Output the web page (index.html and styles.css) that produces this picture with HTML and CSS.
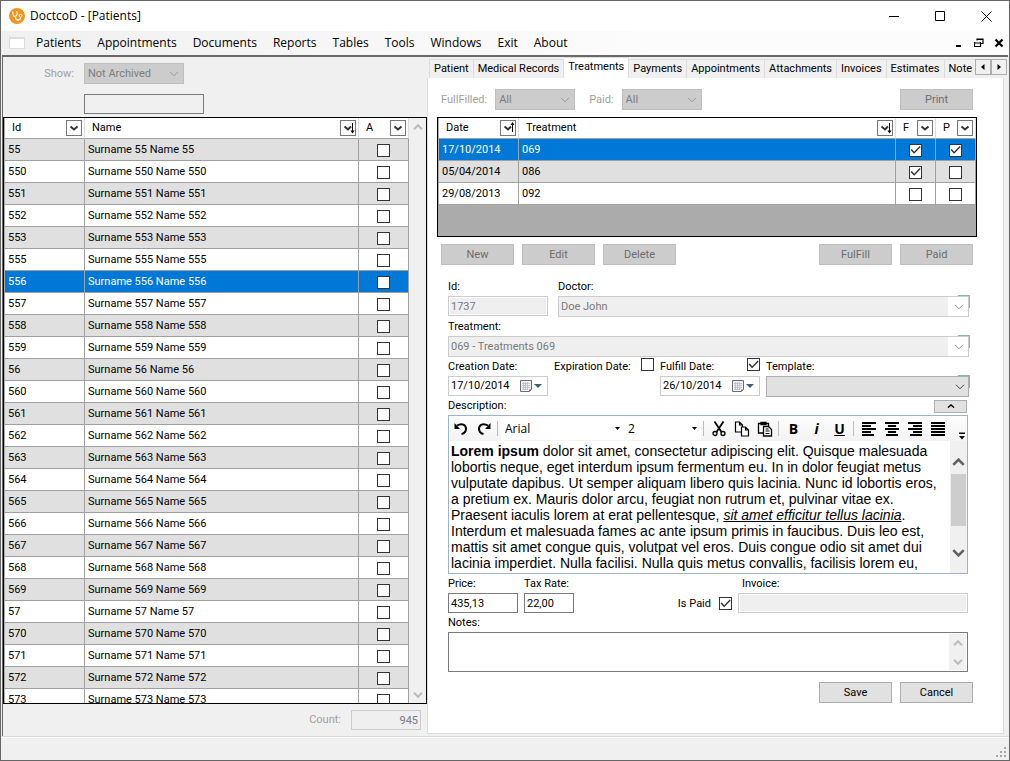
FILE: index.html
```html
<!DOCTYPE html>
<html lang="en">
<head>
<meta charset="utf-8">
<title>DoctcoD - [Patients]</title>
<link rel="stylesheet" href="styles.css">
</head>
<body>
<svg class="defs" aria-hidden="true">
  <symbol id="chev" viewBox="0 0 10 6"><path d="M1 .8 5 4.800 9 .8" fill="none" stroke="currentColor"/></symbol>
  <symbol id="filter" viewBox="0 0 14 14"><path d="M3.500 5.500 7 8.500l3.500-3" fill="none" stroke="#333" stroke-width="2"/></symbol>
  <symbol id="filter-down" viewBox="0 0 14 14"><path d="M3.500 5.500 7 8.500l3-3" fill="none" stroke="#333" stroke-width="2"/><path d="M11.500 2v9" stroke="#000"/><path d="M9.500 9.500h4l-2 3z"/></symbol>
  <symbol id="filter-up" viewBox="0 0 14 14"><path d="M3.500 5.500 7 8.500l3-3" fill="none" stroke="#333" stroke-width="2"/><path d="M11.500 2v9" stroke="#000"/><path d="M9.500 4h4l-2-3z"/></symbol>
  <symbol id="calendar" viewBox="0 0 12 12"><path d="M.5.5h11v9l-2 2h-9z" fill="#f2f2f4" stroke="#6e6a70"/><path d="M2 3.500h8M2 5.500h8M2 7.500h8M2 9.500h6M3.500 2v8M5.500 2v8M7.500 2v8" stroke="#a9b6d2" stroke-width=".7"/><path d="M9 11.500V9.500h2.500z" fill="#6e6a70"/></symbol>
</svg>
<div class="window">
  <header class="titlebar">
    <svg class="logo" viewBox="0 0 16 16" aria-hidden="true"><circle cx="8" cy="8" r="8" fill="#f3941f"/><path d="M4 3.500c-.8 3 .4 4.700 2.200 4.700S8.800 6 7.700 3.300M6.200 8.200c.1 3 1.200 4 2.900 3.900 2 0 2.500-1.400 2.500-3" fill="none" stroke="#fff" stroke-width="1.100"/><circle cx="11.600" cy="7.600" r="1.400" fill="none" stroke="#fff"/><circle cx="9" cy="12" r="1" fill="#fff"/></svg>
    <h1 class="title">DoctcoD - [Patients]</h1>
    <div class="caption">
      <button type="button" aria-label="Minimize"><svg viewBox="0 0 11 11"><path d="M0 5.500h10" stroke="#000"/></svg></button>
      <button type="button" aria-label="Maximize"><svg viewBox="0 0 11 11"><path d="M.5.5h9v9h-9z" fill="none" stroke="#000"/></svg></button>
      <button type="button" aria-label="Close"><svg viewBox="0 0 11 11"><path d="M.5.500l10 10M10.500.500l-10 10" stroke="#000"/></svg></button>
    </div>
  </header>
  <nav class="menubar">
    <span class="child-icon"></span>
    <button type="button">Patients</button><button type="button">Appointments</button><button type="button">Documents</button><button type="button">Reports</button><button type="button">Tables</button><button type="button">Tools</button><button type="button">Windows</button><button type="button">Exit</button><button type="button">About</button>
    <div class="child-caption">
      <button type="button" aria-label="Minimize child"><svg viewBox="0 0 10 10"><path d="M2 8h5" stroke="#000" stroke-width="2"/></svg></button>
      <button type="button" aria-label="Restore child"><svg viewBox="0 0 10 10"><path d="M3 1.500h6M3 .5v2M9 .5v5H7M3 1h6M1 5h6M.500 4v4.500h6V4" fill="none" stroke="#000" stroke-width="1.200"/></svg></button>
      <button type="button" aria-label="Close child"><svg viewBox="0 0 10 10"><path d="M1.500 1.500l7 7M8.500 1.500l-7 7" stroke="#000" stroke-width="2.200"/></svg></button>
    </div>
  </nav>
  <main class="client">
    <section class="list-pane">
      <div class="search">
        <label for="show">Show:</label>
        <select id="show" class="dim" disabled><option>Not Archived</option></select>
        <input id="search" class="plain" type="text" aria-label="Search">
      </div>
      <div class="grid patients">
        <div class="grid-body">
        <table>
          <colgroup><col class="c-id"><col><col class="c-a"></colgroup>
          <thead><tr>
            <th><div class="head">Id<button type="button" aria-label="Filter Id"><svg><use href="#filter"/></svg></button></div></th>
            <th><div class="head">Name<button type="button" aria-label="Filter Name"><svg><use href="#filter-down"/></svg></button></div></th>
            <th><div class="head">A<button type="button" aria-label="Filter A"><svg><use href="#filter"/></svg></button></div></th>
          </tr></thead>
          <tbody>
            <tr><td>55</td><td>Surname 55 Name 55</td><td><input type="checkbox" aria-label="Archived 55"></td></tr>
            <tr><td>550</td><td>Surname 550 Name 550</td><td><input type="checkbox" aria-label="Archived 550"></td></tr>
            <tr><td>551</td><td>Surname 551 Name 551</td><td><input type="checkbox" aria-label="Archived 551"></td></tr>
            <tr><td>552</td><td>Surname 552 Name 552</td><td><input type="checkbox" aria-label="Archived 552"></td></tr>
            <tr><td>553</td><td>Surname 553 Name 553</td><td><input type="checkbox" aria-label="Archived 553"></td></tr>
            <tr><td>555</td><td>Surname 555 Name 555</td><td><input type="checkbox" aria-label="Archived 555"></td></tr>
            <tr class="selected"><td>556</td><td>Surname 556 Name 556</td><td><input type="checkbox" aria-label="Archived 556"></td></tr>
            <tr><td>557</td><td>Surname 557 Name 557</td><td><input type="checkbox" aria-label="Archived 557"></td></tr>
            <tr><td>558</td><td>Surname 558 Name 558</td><td><input type="checkbox" aria-label="Archived 558"></td></tr>
            <tr><td>559</td><td>Surname 559 Name 559</td><td><input type="checkbox" aria-label="Archived 559"></td></tr>
            <tr><td>56</td><td>Surname 56 Name 56</td><td><input type="checkbox" aria-label="Archived 56"></td></tr>
            <tr><td>560</td><td>Surname 560 Name 560</td><td><input type="checkbox" aria-label="Archived 560"></td></tr>
            <tr><td>561</td><td>Surname 561 Name 561</td><td><input type="checkbox" aria-label="Archived 561"></td></tr>
            <tr><td>562</td><td>Surname 562 Name 562</td><td><input type="checkbox" aria-label="Archived 562"></td></tr>
            <tr><td>563</td><td>Surname 563 Name 563</td><td><input type="checkbox" aria-label="Archived 563"></td></tr>
            <tr><td>564</td><td>Surname 564 Name 564</td><td><input type="checkbox" aria-label="Archived 564"></td></tr>
            <tr><td>565</td><td>Surname 565 Name 565</td><td><input type="checkbox" aria-label="Archived 565"></td></tr>
            <tr><td>566</td><td>Surname 566 Name 566</td><td><input type="checkbox" aria-label="Archived 566"></td></tr>
            <tr><td>567</td><td>Surname 567 Name 567</td><td><input type="checkbox" aria-label="Archived 567"></td></tr>
            <tr><td>568</td><td>Surname 568 Name 568</td><td><input type="checkbox" aria-label="Archived 568"></td></tr>
            <tr><td>569</td><td>Surname 569 Name 569</td><td><input type="checkbox" aria-label="Archived 569"></td></tr>
            <tr><td>57</td><td>Surname 57 Name 57</td><td><input type="checkbox" aria-label="Archived 57"></td></tr>
            <tr><td>570</td><td>Surname 570 Name 570</td><td><input type="checkbox" aria-label="Archived 570"></td></tr>
            <tr><td>571</td><td>Surname 571 Name 571</td><td><input type="checkbox" aria-label="Archived 571"></td></tr>
            <tr><td>572</td><td>Surname 572 Name 572</td><td><input type="checkbox" aria-label="Archived 572"></td></tr>
            <tr><td>573</td><td>Surname 573 Name 573</td><td><input type="checkbox" aria-label="Archived 573"></td></tr>
          </tbody>
        </table>
        </div>
        <div class="scrollbar light">
          <button type="button" aria-label="Scroll up"><svg class="flip"><use href="#chev"/></svg></button>
          <button type="button" aria-label="Scroll down"><svg><use href="#chev"/></svg></button>
        </div>
      </div>
      <div class="count">
        <label for="count">Count:</label>
        <input id="count" type="text" value="945" disabled>
      </div>
    </section>

    <section class="detail-pane">
      <div class="tabs">
        <div class="tablist" role="tablist">
          <button type="button" role="tab">Patient</button><button type="button" role="tab">Medical Records</button><button type="button" role="tab" aria-selected="true">Treatments</button><button type="button" role="tab">Payments</button><button type="button" role="tab">Appointments</button><button type="button" role="tab">Attachments</button><button type="button" role="tab">Invoices</button><button type="button" role="tab">Estimates</button><button type="button" role="tab">Note</button>
        </div>
        <div class="spinner">
          <button type="button" aria-label="Previous tabs"><svg viewBox="0 0 6 6"><path d="M4.500 0v6L1 3z"/></svg></button>
          <button type="button" aria-label="Next tabs"><svg viewBox="0 0 6 6"><path d="M1.500 0v6L5 3z"/></svg></button>
        </div>
      </div>
      <div class="page">
        <div class="bar">
          <label for="fulfilled">FullFilled:</label>
          <select id="fulfilled" class="dim" disabled><option>All</option></select>
          <label for="paid-filter" class="next">Paid:</label>
          <select id="paid-filter" class="dim" disabled><option>All</option></select>
          <button type="button" class="btn push" disabled>Print</button>
        </div>
        <div class="grid treatments">
          <table>
            <colgroup><col class="c-id"><col><col class="c-f"><col class="c-f"></colgroup>
            <thead><tr>
              <th><div class="head">Date<button type="button" aria-label="Filter Date"><svg><use href="#filter-up"/></svg></button></div></th>
              <th><div class="head">Treatment<button type="button" aria-label="Filter Treatment"><svg><use href="#filter-down"/></svg></button></div></th>
              <th><div class="head">F<button type="button" aria-label="Filter F"><svg><use href="#filter"/></svg></button></div></th>
              <th><div class="head">P<button type="button" aria-label="Filter P"><svg><use href="#filter"/></svg></button></div></th>
            </tr></thead>
            <tbody>
              <tr class="selected"><td>17/10/2014</td><td>069</td><td><input type="checkbox" aria-label="Fulfilled 069" checked></td><td><input type="checkbox" aria-label="Paid 069" checked></td></tr>
              <tr class="shade"><td>05/04/2014</td><td>086</td><td><input type="checkbox" aria-label="Fulfilled 086" checked></td><td><input type="checkbox" aria-label="Paid 086"></td></tr>
              <tr><td>29/08/2013</td><td>092</td><td><input type="checkbox" aria-label="Fulfilled 092"></td><td><input type="checkbox" aria-label="Paid 092"></td></tr>
            </tbody>
          </table>
        </div>
        <div class="bar">
          <button type="button" class="btn" disabled>New</button>
          <button type="button" class="btn" disabled>Edit</button>
          <button type="button" class="btn" disabled>Delete</button>
          <button type="button" class="btn push" disabled>FulFill</button>
          <button type="button" class="btn" disabled>Paid</button>
        </div>
        <form class="form">
          <div class="row row-id">
            <div class="field"><label for="tid">Id:</label><input id="tid" type="text" value="1737" disabled></div>
            <div class="field"><label for="doctor">Doctor:</label><div class="pick"><select id="doctor" disabled><option>Doe John</option></select></div></div>
          </div>
          <div class="field"><label for="treatment">Treatment:</label><div class="pick"><select id="treatment" disabled><option>069 - Treatments 069</option></select></div></div>
          <div class="row row-dates">
            <div class="field"><label for="created">Creation Date:</label>
              <div class="date"><input id="created" type="text" value="17/10/2014"><button type="button" aria-label="Choose creation date"><svg class="cal"><use href="#calendar"/></svg><svg class="tri" viewBox="0 0 8 4"><path d="M0 0h8L4 4z"/></svg></button></div></div>
            <div class="field"><span class="tick"><label for="expires">Expiration Date:</label><input id="expires" type="checkbox"></span></div>
            <div class="field"><span class="tick"><label for="fulfil-on">Fulfill Date:</label><input id="fulfil-on" type="checkbox" checked></span>
              <div class="date"><input type="text" value="26/10/2014" aria-label="Fulfill date"><button type="button" aria-label="Choose fulfill date"><svg class="cal"><use href="#calendar"/></svg><svg class="tri" viewBox="0 0 8 4"><path d="M0 0h8L4 4z"/></svg></button></div></div>
            <div class="field"><label for="template">Template:</label><div class="pick"><select id="template" class="live"><option></option></select></div></div>
          </div>
          <div class="desc-head"><span id="desc">Description:</span><button type="button" aria-label="Collapse"><svg viewBox="0 0 8 4"><path d="M1 3.500 4 1l3 2.500" fill="none" stroke="#000" stroke-width="1.500"/></svg></button></div>
          <div class="editor">
            <div class="toolbar">
              <button type="button" aria-label="Undo"><svg viewBox="0 0 16 16"><path d="M4 4.500C9 1.500 13 4 13 7.500c0 3-2 5-4.500 5.500" fill="none" stroke="#000" stroke-width="2"/><path d="M1.500 2v6H7z"/></svg></button>
              <button type="button" aria-label="Redo"><svg viewBox="0 0 16 16"><path d="M12 4.500C7 1.500 3 4 3 7.500c0 3 2 5 4.500 5.500" fill="none" stroke="#000" stroke-width="2"/><path d="M14.500 2v6H9z"/></svg></button>
              <i class="sep"></i>
              <select class="face" aria-label="Font"><option>Arial</option></select>
              <select class="size" aria-label="Font size"><option>2</option></select>
              <i class="sep"></i>
              <button type="button" aria-label="Cut"><svg viewBox="0 0 16 16" fill="none" stroke="#000" stroke-width="1.300"><path d="M3.500.500 10.500 11M12.500.500 5.500 11" stroke-width="1.800"/><circle cx="4" cy="12.500" r="2"/><circle cx="12" cy="12.500" r="2"/></svg></button>
              <button type="button" aria-label="Copy"><svg viewBox="0 0 16 16" fill="#fff" stroke="#000" stroke-width="1.200"><path d="M1.500 1h4l3 3v7h-7zM5.500 1v3h3"/><path d="M7.500 6h4l3 3v6h-7zM11.500 6v3h3"/></svg></button>
              <button type="button" aria-label="Paste"><svg viewBox="0 0 16 16" fill="#fff" stroke="#000" stroke-width="1.300"><path d="M1.500 2.500h10V12h-10z"/><path d="M4 1.500h5v2H4z" fill="#000"/><path d="M6.500 5.500h5l3 3v6.500h-8z"/><path d="M8.500 8h3M8.500 10h4M8.500 12.500h4" stroke-width="1"/></svg></button>
              <i class="sep"></i>
              <button type="button" class="glyph b">B</button>
              <button type="button" class="glyph it">i</button>
              <button type="button" class="glyph u">U</button>
              <i class="sep"></i>
              <button type="button" aria-label="Align left"><svg viewBox="0 0 16 16"><path d="M1 2h14M1 5h9M1 8h14M1 11h9M1 14h12" stroke="#000" stroke-width="2"/></svg></button>
              <button type="button" aria-label="Align center"><svg viewBox="0 0 16 16"><path d="M1 2h14M4 5h8M1 8h14M4 11h8M2 14h12" stroke="#000" stroke-width="2"/></svg></button>
              <button type="button" aria-label="Align right"><svg viewBox="0 0 16 16"><path d="M1 2h14M6 5h9M1 8h14M6 11h9M3 14h12" stroke="#000" stroke-width="2"/></svg></button>
              <button type="button" aria-label="Justify"><svg viewBox="0 0 16 16"><path d="M1 2h14M1 5h14M1 8h14M1 11h14M1 14h14" stroke="#000" stroke-width="2"/></svg></button>
              <button type="button" class="more" aria-label="More"><svg viewBox="0 0 8 8"><path d="M1 .500h6v1.500H1zM1 4h6L4 7.500z"/></svg></button>
            </div>
            <div class="editor-body">
              <div class="text" role="textbox" aria-multiline="true" aria-labelledby="desc" contenteditable="true" spellcheck="false"><b>Lorem ipsum</b> dolor sit amet, consectetur adipiscing elit. Quisque malesuada<br>lobortis neque, eget interdum ipsum fermentum eu. In in dolor feugiat metus<br>vulputate dapibus. Ut semper aliquam libero quis lacinia. Nunc id lobortis eros,<br>a pretium ex. Mauris dolor arcu, feugiat non rutrum et, pulvinar vitae ex.<br>Praesent iaculis lorem at erat pellentesque, <em>sit amet efficitur tellus lacinia</em>.<br>Interdum et malesuada fames ac ante ipsum primis in faucibus. Duis leo est,<br>mattis sit amet congue quis, volutpat vel eros. Duis congue odio sit amet dui<br>lacinia imperdiet. Nulla facilisi. Nulla quis metus convallis, facilisis lorem eu,</div>
              <div class="scrollbar dark">
                <button type="button" aria-label="Scroll text up"><svg class="flip"><use href="#chev"/></svg></button>
                <span class="thumb"></span>
                <button type="button" aria-label="Scroll text down"><svg><use href="#chev"/></svg></button>
              </div>
            </div>
          </div>
          <div class="row row-price">
            <div class="field"><label for="price">Price:</label><input id="price" class="plain" type="text" value="435,13"></div>
            <div class="field"><label for="tax">Tax Rate:</label><input id="tax" class="plain" type="text" value="22,00"></div>
            <span class="tick paid"><label for="is-paid">Is Paid</label><input id="is-paid" type="checkbox" checked></span>
            <div class="field"><label class="inset" for="invoice">Invoice:</label><input id="invoice" type="text" disabled></div>
          </div>
          <div class="field"><label for="notes">Notes:</label>
            <div class="notes"><textarea id="notes"></textarea>
              <div class="scrollbar light">
                <button type="button" aria-label="Scroll notes up"><svg class="flip"><use href="#chev"/></svg></button>
                <button type="button" aria-label="Scroll notes down"><svg><use href="#chev"/></svg></button>
              </div>
            </div>
          </div>
        </form>
        <div class="bar actions">
          <button type="button" class="btn push">Save</button>
          <button type="button" class="btn">Cancel</button>
        </div>
      </div>
    </section>
  </main>
  <footer class="status"><svg viewBox="0 0 11 11" aria-hidden="true"><path d="M8 0h2v2H8zM8 4h2v2H8zM8 8h2v2H8zM4 4h2v2H4zM4 8h2v2H4zM0 8h2v2H0z" fill="#a8a8a8"/></svg></footer>
</div>
</body>
</html>
```
FILE: styles.css
```css
* { box-sizing: border-box; }
body {
  margin: 0;
  color: #000;
  font: 11px/18px "Roboto", sans-serif;
}
button, input, select, textarea {
  margin: 0;
  padding: 0;
  border: 0;
  border-radius: 0;
  background: none;
  color: inherit;
  font: inherit;
}
svg { display: block; }
.defs { position: absolute; width: 0; height: 0; }

.window {
  display: flex;
  flex-direction: column;
  height: 100vh;
  border: 1px solid #666;
  background: #f0f0f0;
}

/* Title and menu */
.titlebar {
  display: flex;
  flex: none;
  align-items: center;
  height: 30px;
  padding-left: 8px;
  background: #fff;
}
.logo { width: 16px; height: 16px; }
.title {
  margin: 0 auto 0 5px;
  font: 12px/18px "Open Sans", sans-serif;
}
.caption { display: flex; }
.caption button { display: grid; place-items: center; width: 46px; height: 28px; }
.caption svg { width: 11px; height: 11px; }
.menubar {
  display: flex;
  flex: none;
  align-items: center;
  height: 24px;
  padding-left: 8px;
  background: linear-gradient(90deg, #f0f0f0, #fcfcfc 65%);
  font: 12px/18px "Open Sans", sans-serif;
}
.menubar > button { margin-right: 16px; }
.child-icon {
  width: 16px;
  height: 12px;
  margin-right: 11px;
  border: 1px solid #dcdcdc;
  border-top-width: 2px;
  background: #fff;
}
.child-caption { display: flex; gap: 10px; margin-left: auto; padding-right: 5px; }
.child-caption svg { width: 10px; height: 10px; }

.client {
  display: grid;
  flex: 1;
  grid-template-columns: minmax(0, 424fr) minmax(0, 580fr);
  min-height: 0;
  margin: 0 1px;
  border: solid #696969;
  border-width: 2px 0 0 1px;
  padding-right: 1px;
}

/* Controls */
input[type="text"], textarea, select, .date { height: 20px; padding: 0 2px; border: 1px solid #ccc; background: #fff; }
input[type="text"]:disabled { border: 1px solid #ccc; background: #efefef; color: #7a7a7a; box-shadow: inset 0 0 0 1px #fff; }
input.plain { border: 1px solid #7a7a7a; }
select {
  appearance: none;
  background: #fff url("data:image/svg+xml,%3Csvg xmlns='http://www.w3.org/2000/svg' width='10' height='6'%3E%3Cpath d='M1 .8 5 4.800 9 .8' fill='none' stroke='%23999'/%3E%3C/svg%3E") no-repeat right 4px center;
  opacity: 1;
}
select.dim { width: 100px; height: 21px; padding: 0 3px; border-color: #bfbfbf; background-color: #ccc; color: #7d7d7d; }
input[type="checkbox"] {
  display: grid;
  flex: none;
  place-items: center;
  appearance: none;
  width: 13px;
  height: 13px;
  border: 1px solid #333;
  background: #fff;
}
input[type="checkbox"]:checked::before {
  width: 11px;
  height: 11px;
  background: #333;
  clip-path: polygon(5% 50%, 16% 42%, 38% 66%, 88% 14%, 97% 22%, 38% 84%);
  content: "";
}
.btn {
  width: 73px;
  height: 21px;
  border: 1px solid #adadad;
  background: #e1e1e1;
}
.btn:disabled { border-color: #bfbfbf; background: #ccc; color: #6d6d6d; }
.push { margin-left: auto; }

/* Left pane */
.list-pane { display: flex; flex-direction: column; min-height: 0; }
.search {
  display: grid;
  grid-template-columns: 71px 120px;
  gap: 10px;
  padding: 6px 0 3px;
  color: #a0a0a0;
}
.search label { justify-self: end; line-height: 21px; }
.search .plain { grid-column: 2; background: #f0f0f0; }
.count {
  display: flex;
  align-items: center;
  justify-content: flex-end;
  gap: 10px;
  padding: 6px 6px 6px 0;
  color: #a0a0a0;
}
.count input[type="text"] { width: 70px; text-align: right; box-shadow: none; }

/* Data grids */
.grid {
  border: 1px solid #000;
  background: #ababab;
}
.patients { display: flex; flex: 1; min-height: 0; padding-left: 1px; }
.grid-body { flex: 1; min-width: 0; overflow: hidden; }
table { width: 100%; border-spacing: 0; table-layout: fixed; background: #fff; }
.c-id { width: 80px; }
.c-a { width: 50px; }
.c-f { width: 40px; }
th, td { height: 22px; padding: 0 3px; border: solid #a0a0a0; border-width: 0 1px 1px 0; text-align: left; font-weight: 400; line-height: 20px; white-space: nowrap; }
td { padding-top: 1px; }
th { height: 21px; padding: 0 2px 0 7px; border-right-color: #ddd; }
td input { margin: 0 auto; }
.patients tbody tr:nth-child(odd), tr.shade { background: #e0e0e0; }
.grid tbody tr.selected { background: #0078d7; color: #fff; }
.head { display: flex; align-items: center; justify-content: space-between; }
.head button { width: 16px; height: 16px; border: 1px solid #777; background: #fff; }
.head svg { width: 14px; height: 14px; }
.treatments { height: 120px; margin: 7px 0; padding-left: 1px; }

.scrollbar { display: flex; flex: none; flex-direction: column; justify-content: space-between; width: 17px; background: #f0f0f0; }
.scrollbar button { display: grid; flex: none; place-items: center; height: 17px; }
.scrollbar svg { width: 10px; height: 6px; }
.scrollbar .flip { transform: rotate(180deg); }
.light use { stroke-width: 2; color: #bbb; }
.dark use { stroke-width: 2; color: #606060; }
.scrollbar.dark svg { width: 13px; height: 8px; }

/* Right pane */
.detail-pane { display: flex; flex-direction: column; min-width: 0; }
.tabs { display: flex; align-items: flex-end; height: 21px; padding-left: 2px; }
.tablist { display: flex; flex: 1; align-items: flex-end; min-width: 0; overflow: hidden; }
.tablist button {
  flex: none;
  height: 19px;
  padding: 0 4px;
  border: 1px solid #dcdcdc;
  border-width: 1px 1px 0 0;
  background: #f0f0f0;
}
.tablist button:first-child { border-left-width: 1px; }
.tablist button[aria-selected] { height: 21px; padding: 0 4px 3px; background: #fff; }
.spinner { display: flex; margin-bottom: 3px; }
.spinner button { display: grid; place-items: center; width: 16px; height: 16px; border: 1px solid #adadad; background: #f0f0f0; }
.spinner svg { width: 6px; height: 6px; }
.page {
  flex: 1;
  margin: 0 3px 2px 0;
  padding: 11px 26px 0 9px;
  border: 1px solid #dcdcdc;
  border-width: 0 1px 1px;
  background: #fff;
}
.bar { display: flex; align-items: center; gap: 8px; padding: 0 4px; color: #a0a0a0; }
.bar .btn:enabled { color: #000; }
.bar select.dim { width: 80px; }
.bar .next { margin-left: 6px; }
.form { padding: 12px 8px 0 11px; }
.row { display: grid; column-gap: 6px; }
.row-id { grid-template-columns: 100px minmax(0, 1fr); column-gap: 10px; }
.row-dates { grid-template-columns: 100px 100px 100px minmax(0, 1fr); }
.row-price { grid-template-columns: 70px 50px 152px minmax(0, 1fr); margin-right: 1px; }
.field { display: flex; flex-direction: column; min-width: 0; white-space: nowrap; }
.field > label { line-height: 19px; }
.field > .inset { padding-left: 4px; }
.pick { position: relative; }
.pick select {
  width: 100%;
  height: 21px;
  padding: 0 2px;
  color: #7a7a7a;
  background:
    url("data:image/svg+xml,%3Csvg xmlns='http://www.w3.org/2000/svg' width='10' height='6'%3E%3Cpath d='M1 .8 5 4.800 9 .8' fill='none' stroke='%23999'/%3E%3C/svg%3E") no-repeat right 4px center,
    linear-gradient(#fff, #fff) no-repeat right / 20px 100%,
    #efefef;
}
.pick select:disabled { border: 1px solid #ccc; }
.pick select.live {
  border-color: #adadad;
  background: #e1e1e1 url("data:image/svg+xml,%3Csvg xmlns='http://www.w3.org/2000/svg' width='10' height='6'%3E%3Cpath d='M1 .8 5 4.800 9 .8' fill='none' stroke='%23444'/%3E%3C/svg%3E") no-repeat right 3px center;
}
.pick::after {
  position: absolute;
  top: -1px;
  right: -1px;
  width: 11px;
  height: 12px;
  border: solid #84b8ab;
  border-width: 1px 1px 0 0;
  content: "";
  pointer-events: none;
}
.date { display: flex; align-items: center; }
.date input[type="text"] { flex: 1; min-width: 0; height: 18px; padding: 0; border: 0; }
.date button { display: flex; align-items: center; gap: 2px; padding-right: 3px; }
.cal { width: 12px; height: 12px; }
.tri { width: 8px; height: 4px; fill: #435a82; }
.tick { display: flex; align-items: center; justify-content: space-between; height: 19px; }
.tick input { margin-bottom: 4px; }
.tick.paid { align-self: end; justify-content: flex-end; gap: 8px; }
.tick.paid input { margin: 0; }
.desc-head { display: flex; align-items: center; justify-content: space-between; line-height: 18px; }
.desc-head button { display: grid; place-items: center; width: 33px; height: 13px; margin-right: 2px; border: 1px solid #adadad; background: #e1e1e1; }
.desc-head svg { width: 8px; height: 4px; }

.editor { margin-right: 1px; border: 1px solid #9db4c8; }
.toolbar { display: flex; align-items: center; height: 25px; background: linear-gradient(#fdfdfd, #f3f3f3); }
.toolbar button { display: grid; flex: none; place-items: center; width: 23px; height: 23px; }
.toolbar svg { width: 16px; height: 16px; }
.sep { width: 1px; height: 15px; margin: 0 3px 0 2px; background: #bdbdbd; }
.toolbar select {
  height: 23px;
  padding: 0 4px;
  border: 0;
  background: #fff url("data:image/svg+xml,%3Csvg xmlns='http://www.w3.org/2000/svg' width='5' height='3'%3E%3Cpath d='M0 0h5L2.500 3z'/%3E%3C/svg%3E") no-repeat right 4px center;
  font: 12px/18px "Open Sans", sans-serif;
}
.toolbar .face { width: 123px; }
.toolbar .size { width: 77px; }
.toolbar .glyph { font: 700 14px/18px "Open Sans", sans-serif; }
.toolbar .it { font-style: italic; }
.toolbar .u { text-decoration: underline; }
.toolbar .more { width: 10px; margin-left: auto; place-items: end center; }
.toolbar .more svg { width: 8px; height: 8px; }
.editor-body { display: flex; }
.text { flex: 1; min-width: 0; padding: 2px 0 2px 2px; overflow: hidden; background: #fff; font: 14px/16px "Liberation Sans", sans-serif; white-space: nowrap; outline: 0; }
.text em { text-decoration: underline; }
.editor .scrollbar { padding: 12px 0; }
.thumb { height: 52px; margin: 4px 1px auto; background: #cdcdcd; }
.notes { display: flex; height: 40px; margin-right: 1px; border: 1px solid #7a7a7a; padding: 1px; }
.notes textarea { flex: 1; min-width: 0; height: 100%; border: 0; resize: none; }
.actions { padding-top: 10px; }

.status {
  display: flex;
  flex: none;
  align-items: flex-end;
  justify-content: flex-end;
  height: 24px;
  padding: 0 2px 2px;
  border-top: 1px solid #d8d8d8;
  box-shadow: inset 0 1px #fff;
}
.status svg { width: 11px; height: 11px; }
```
